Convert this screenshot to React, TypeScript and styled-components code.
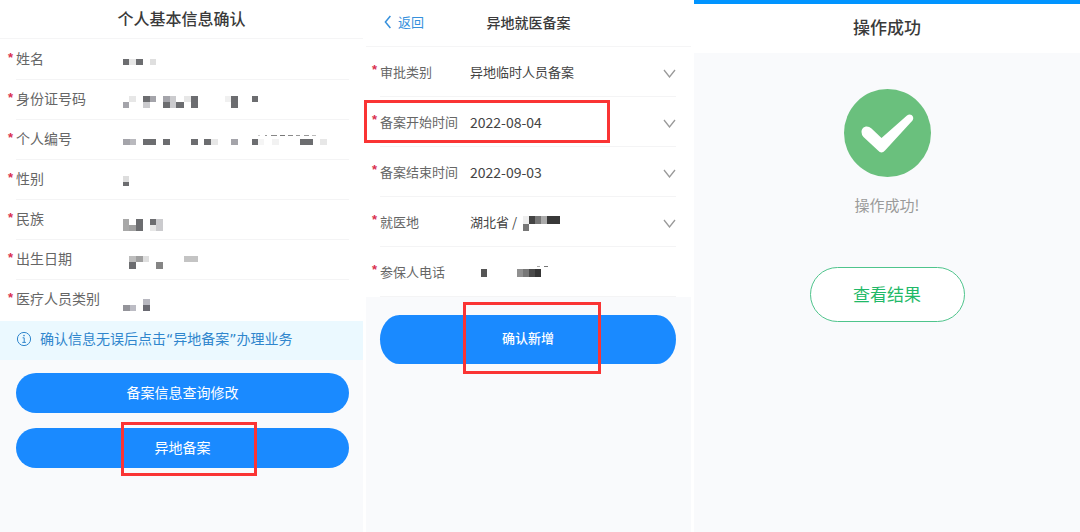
import React from "react";
import styled, { createGlobalStyle } from "styled-components";

const GlobalStyle = createGlobalStyle`
  * { box-sizing: border-box; }
  body {
    margin: 0;
    background: #ffffff;
    color: #333333;
    font-family: "Noto Sans CJK SC", "Noto Sans", sans-serif;
  }
  h1, dl, dd, dt, p { margin: 0; }
  button, input, select { font: inherit; color: inherit; }
`;

const Screens = styled.main`
  display: grid;
  grid-template-columns: 363fr 325fr 386fr;
  column-gap: 3px;
  min-height: 100vh;
`;

const Panel = styled.section`
  display: flex;
  flex-direction: column;
  background: #f9fafc;
`;

const Header = styled.header<{ $height: number; $line?: boolean }>`
  display: grid;
  grid-template-columns: 1fr auto 1fr;
  align-items: center;
  height: ${(p) => p.$height}px;
  padding-bottom: 3px;
  background: #ffffff;
  border-bottom: ${(p) => (p.$line ? "1px solid #f5f5f6" : "none")};
`;

const Title = styled.h1<{ $size: number }>`
  grid-column: 2;
  font-size: ${(p) => p.$size}px;
  line-height: 24px;
  font-weight: 500;
  color: #3a3a3a;
`;

const BackLink = styled.a`
  display: flex;
  align-items: center;
  gap: 6px;
  padding-left: 18px;
  font-size: 13px;
  line-height: 20px;
  color: #3690dc;
  text-decoration: none;
`;

const InfoList = styled.dl`
  padding: 1px 0;
  background: #ffffff;
`;

const InfoRow = styled.div`
  display: flex;
  align-items: center;
  height: 40px;
  margin: 0 14px 0 16px;
  border-bottom: 1px solid #f4f4f5;

  &:last-child { border-bottom-color: transparent; }
`;

const Star = styled.span`
  flex: none;
  width: 8px;
  margin-left: -8px;
  padding-bottom: 3px;
  font-family: "Liberation Sans", sans-serif;
  font-size: 13px;
  line-height: 16px;
  font-weight: 700;
  color: #d9304f;
`;

const InfoLabel = styled.dt`
  width: 106px;
  padding-bottom: 3px;
  font-size: 14px;
  line-height: 20px;
  color: #666666;
  white-space: nowrap;
`;

const InfoValue = styled.dd`
  display: flex;
`;

const Notice = styled.p`
  display: flex;
  align-items: center;
  gap: 8px;
  height: 39px;
  padding: 0 16px 3px;
  background: #ebf9ff;
  font-family: "DejaVu Sans", "Noto Sans CJK SC", sans-serif;
  font-size: 14px;
  line-height: 20px;
  color: #2f86cd;
  white-space: nowrap;
`;

const Actions = styled.div`
  display: flex;
  flex-direction: column;
  gap: 15px;
  padding: 13px 14px 0 16px;
`;

const PrimaryButton = styled.button<{ $tall?: boolean }>`
  position: relative;
  width: 100%;
  height: ${(p) => (p.$tall ? 49 : 40)}px;
  padding: 0 0 3px;
  border: 0;
  border-radius: ${(p) => (p.$tall ? "20px / 25px" : "20px")};
  background: #1a8aff;
  color: #ffffff;
  font-size: ${(p) => (p.$tall ? 13 : 14)}px;
  line-height: 20px;
  font-weight: ${(p) => (p.$tall ? 500 : 400)};
`;

const Highlight = styled.span<{ $x: number; $y: number; $w: number; $h: number }>`
  position: absolute;
  left: ${(p) => p.$x}px;
  top: ${(p) => p.$y}px;
  width: ${(p) => p.$w}px;
  height: ${(p) => p.$h}px;
  border: 3px solid #fa3434;
  pointer-events: none;
`;

const Form = styled.form`
  display: flex;
  flex-direction: column;
`;

const Fields = styled.div`
  background: #ffffff;
`;

const Field = styled.div`
  position: relative;
  display: flex;
  align-items: center;
  height: 50px;
  margin: 0 15px 0 14px;
  border-bottom: 1px solid #f4f4f5;
  font-size: 13px;
  line-height: 20px;
`;

const FieldLabel = styled.label`
  flex: none;
  width: 90px;
  color: #666666;
  white-space: nowrap;
`;

const SelectBox = styled.select`
  flex: 1;
  min-width: 0;
  padding: 0;
  border: 0;
  background: transparent;
  color: #444444;
  appearance: none;
`;

const DateBox = styled.input`
  flex: 1;
  min-width: 0;
  padding: 0;
  border: 0;
  background: transparent;
  color: #444444;
  font-size: 14px;
`;

const PlaceButton = styled.button`
  display: flex;
  flex: 1;
  align-items: center;
  gap: 6px;
  padding: 0;
  border: 0;
  background: transparent;
  color: #444444;
`;

const PhoneValue = styled.output`
  display: flex;
`;

const ChevronIcon = styled.svg`
  flex: none;
  margin-top: 3px;
`;

const FormActions = styled.div`
  padding: 18px 15px 0 14px;
`;

const TopBar = styled.div`
  height: 4px;
  background: #0094ff;
`;

const Result = styled.div`
  display: flex;
  flex-direction: column;
  align-items: center;
  padding-top: 36px;
`;

const ResultText = styled.p`
  margin: 18px 0 52px;
  font-size: 15px;
  line-height: 20px;
  color: #9a9a9a;
`;

const OutlineButton = styled.button`
  width: 155px;
  height: 55px;
  padding: 0 0 2px;
  border: 1px solid #4fc48c;
  border-radius: 28px;
  background: #ffffff;
  color: #1fb968;
  font-size: 17px;
  line-height: 24px;
`;

type Cell = [x: number, y: number, w: number, h: number, fill: string];

const D = "#6c6d70";
const M = "#a4a4aa";
const L = "#cbcbce";
const X = "#e7e7e7";

function Mosaic({ cells, width, height }: { cells: Cell[]; width: number; height: number }) {
  return (
    <svg width={width} height={height} shapeRendering="crispEdges" aria-hidden="true">
      {cells.map(([x, y, w, h, fill], i) => (
        <rect key={i} x={x} y={y} width={w} height={h} fill={fill} />
      ))}
    </svg>
  );
}

const info: { label: string; cells: Cell[] }[] = [
  { label: "姓名", cells: [[1, 19, 6, 6, D], [7, 19, 7, 6, X], [14, 19, 7, 6, D], [28, 19, 6, 6, "#dfdfdf"]] },
  {
    label: "身份证号码",
    cells: [
      [7, 16, 7, 6, X], [21, 16, 7, 6, D], [28, 16, 6, 6, M], [41, 16, 7, 6, M], [48, 16, 6, 6, L],
      [62, 16, 7, 6, X], [69, 16, 7, 12, D], [103, 16, 6, 6, "#f0f0f0"], [109, 16, 7, 12, D], [130, 16, 6, 6, D],
      [1, 22, 6, 6, M], [21, 22, 7, 6, L], [41, 22, 7, 6, D], [48, 22, 6, 6, L], [54, 22, 8, 6, D],
    ],
  },
  {
    label: "个人编号",
    cells: [
      [1, 19, 7, 6, M], [8, 19, 6, 6, "#b9b9be"], [21, 19, 13, 6, D], [41, 19, 7, 6, D], [69, 19, 7, 6, D],
      [82, 19, 7, 6, D], [89, 19, 7, 6, X], [109, 19, 7, 6, M], [130, 19, 6, 6, D], [136, 19, 6, 6, "#f5f5f5"],
      [150, 19, 7, 6, "#f2f2f2"], [178, 19, 13, 6, D], [198, 19, 7, 6, X],
      [136, 15, 2, 1, "#cccccc"], [143, 15, 2, 1, "#999999"], [149, 15, 6, 1, "#888888"], [158, 15, 5, 1, "#777777"],
      [166, 15, 5, 1, "#888888"], [174, 15, 4, 1, "#999999"], [182, 15, 5, 1, "#999999"], [190, 15, 4, 1, "#bbbbbb"],
    ],
  },
  { label: "性别", cells: [[1, 16, 6, 6, "#dddddd"], [1, 22, 6, 4, D]] },
  {
    label: "民族",
    cells: [
      [1, 19, 6, 12, "#a8a8a8"], [7, 25, 7, 6, "#a0a0a0"], [14, 19, 7, 12, D],
      [28, 19, 6, 6, D], [28, 25, 6, 6, X], [34, 19, 7, 12, L],
    ],
  },
  {
    label: "出生日期",
    cells: [
      [7, 16, 7, 6, "#bdbdbd"], [14, 16, 7, 6, "#a0a0a0"], [21, 16, 6, 6, "#dfdfdf"], [62, 16, 14, 6, "#c4c4c4"],
      [7, 22, 7, 7, D], [34, 22, 7, 7, "#858585"],
    ],
  },
  {
    label: "医疗人员类别",
    cells: [[21, 19, 7, 6, "#b8b8c0"], [1, 25, 7, 6, "#94949a"], [8, 25, 6, 6, "#bcbcc4"], [21, 25, 7, 6, "#6a6a72"]],
  },
];

const placeCells: Cell[] = [
  [0, 19, 6, 8, "#eeeeee"], [6, 19, 6, 8, "#444444"], [12, 19, 6, 8, "#777777"],
  [18, 19, 6, 8, "#aaaaaa"], [24, 19, 13, 8, "#383838"], [0, 27, 6, 7, "#777777"],
];

const phoneCells: Cell[] = [
  [11, 22, 6, 8, "#555555"], [47, 22, 6, 8, "#909090"], [53, 22, 6, 8, "#777777"], [59, 22, 6, 8, "#4a4a4a"],
  [65, 22, 6, 8, "#353535"], [67, 19, 3, 1, "#aaaaaa"], [74, 19, 4, 1, "#777777"],
];

function Chevron() {
  return (
    <ChevronIcon width="13" height="9" viewBox="0 0 13 9" fill="none" stroke="#9a9a9a" strokeWidth="1.3" aria-hidden="true">
      <path d="M1 1 L6.5 8 L12 1" />
    </ChevronIcon>
  );
}

function InfoIcon() {
  return (
    <svg width="16" height="16" viewBox="0 0 16 16" fill="none" stroke="#2f86cd" aria-hidden="true">
      <circle cx="8" cy="8" r="6.6" />
      <path d="M6.6 6.8 H8.2 V11.2 M6.3 11.4 H9.9" />
      <circle cx="8" cy="4.6" r="0.8" fill="#2f86cd" stroke="none" />
    </svg>
  );
}

function ConfirmInfo() {
  return (
    <Panel>
      <Header $height={39} $line>
        <Title $size={16}>个人基本信息确认</Title>
      </Header>
      <InfoList>
        {info.map((row) => (
          <InfoRow key={row.label}>
            <Star aria-hidden="true">*</Star>
            <InfoLabel>{row.label}</InfoLabel>
            <InfoValue>
              <Mosaic cells={row.cells} width={210} height={40} />
            </InfoValue>
          </InfoRow>
        ))}
      </InfoList>
      <Notice>
        <InfoIcon />
        确认信息无误后点击“异地备案”办理业务
      </Notice>
      <Actions>
        <PrimaryButton type="button">备案信息查询修改</PrimaryButton>
        <PrimaryButton type="button">
          异地备案
          <Highlight $x={105} $y={-6} $w={136} $h={54} />
        </PrimaryButton>
      </Actions>
    </Panel>
  );
}

function FilingForm() {
  return (
    <Panel>
      <Header $height={47} $line>
        <BackLink href="#back">
          <svg width="8" height="14" viewBox="0 0 8 14" fill="none" stroke="#3690dc" strokeWidth="1.5" aria-hidden="true">
            <path d="M6.4 1 L1.4 7 L6.4 13" />
          </svg>
          返回
        </BackLink>
        <Title $size={14}>异地就医备案</Title>
      </Header>
      <Form>
        <Fields>
          <Field>
            <Star aria-hidden="true">*</Star>
            <FieldLabel htmlFor="category">审批类别</FieldLabel>
            <SelectBox id="category">
              <option>异地临时人员备案</option>
            </SelectBox>
            <Chevron />
          </Field>
          <Field>
            <Star aria-hidden="true">*</Star>
            <FieldLabel htmlFor="start">备案开始时间</FieldLabel>
            <DateBox id="start" type="text" defaultValue="2022-08-04" />
            <Chevron />
            <Highlight $x={-16} $y={3} $w={246} $h={43} />
          </Field>
          <Field>
            <Star aria-hidden="true">*</Star>
            <FieldLabel htmlFor="end">备案结束时间</FieldLabel>
            <DateBox id="end" type="text" defaultValue="2022-09-03" />
            <Chevron />
          </Field>
          <Field>
            <Star aria-hidden="true">*</Star>
            <FieldLabel htmlFor="place">就医地</FieldLabel>
            <PlaceButton id="place" type="button">
              湖北省 /
              <Mosaic cells={placeCells} width={38} height={49} />
            </PlaceButton>
            <Chevron />
          </Field>
          <Field>
            <Star aria-hidden="true">*</Star>
            <FieldLabel htmlFor="phone">参保人电话</FieldLabel>
            <PhoneValue id="phone">
              <Mosaic cells={phoneCells} width={80} height={49} />
            </PhoneValue>
          </Field>
        </Fields>
        <FormActions>
          <PrimaryButton type="button" $tall>
            确认新增
            <Highlight $x={83} $y={-13} $w={138} $h={72} />
          </PrimaryButton>
        </FormActions>
      </Form>
    </Panel>
  );
}

function Success() {
  return (
    <Panel>
      <TopBar />
      <Header $height={49}>
        <Title $size={17}>操作成功</Title>
      </Header>
      <Result>
        <svg width="88" height="88" viewBox="0 0 88 88" aria-hidden="true">
          <ellipse cx="44.500" cy="44" rx="43.5" ry="44" fill="#6ac07d" />
          <path
            d="M18.500 43 C18.500 37.500 24.500 35.500 28.500 39.500 L38.500 49 L64 26.500 C68 23.500 72 28 69.500 31.500 L42 61.500 Q38.500 65.500 35 61.500 L20.500 48 Q18.500 46 18.500 43 Z"
            fill="#ffffff"
          />
        </svg>
        <ResultText>操作成功!</ResultText>
        <OutlineButton type="button">查看结果</OutlineButton>
      </Result>
    </Panel>
  );
}

export default function App() {
  return (
    <>
      <GlobalStyle />
      <Screens>
        <ConfirmInfo />
        <FilingForm />
        <Success />
      </Screens>
    </>
  );
}
